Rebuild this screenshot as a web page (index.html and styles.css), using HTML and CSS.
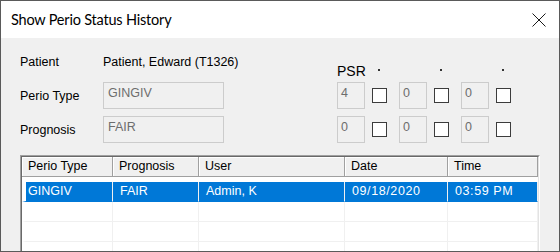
FILE: index.html
```html
<!DOCTYPE html>
<html lang="en">
<head>
    <meta charset="UTF-8">
    <title>Show Perio Status History</title>
    <link rel="stylesheet" href="styles.css">
</head>
<body>
    <div class="window">
        <div class="titlebar">
            <span class="title">Show Perio Status History</span>
            <svg class="close" width="14" height="14" viewBox="0 0 14 14">
                <path d="M0.5 0.5 L13.5 13.5 M13.5 0.5 L0.5 13.5" stroke="#1a1a1a" stroke-width="1" fill="none"/>
            </svg>
        </div>
        <div class="content">
            <div class="form">
                <div class="fields">
                    <span class="label">Patient</span>
                    <span class="value">Patient, Edward (T1326)</span>
                    <span class="label">Perio Type</span>
                    <div class="field">GINGIV</div>
                    <span class="label">Prognosis</span>
                    <div class="field">FAIR</div>
                </div>
                <div class="psr">
                    <span class="psr-title">PSR</span>
                    <span class="dot"></span>
                    <span></span>
                    <span class="dot"></span>
                    <span></span>
                    <span class="dot"></span>

                    <div class="field small">4</div>
                    <span class="check"></span>
                    <div class="field small">0</div>
                    <span class="check"></span>
                    <div class="field small">0</div>
                    <span class="check"></span>

                    <div class="field small">0</div>
                    <span class="check"></span>
                    <div class="field small">0</div>
                    <span class="check"></span>
                    <div class="field small">0</div>
                    <span class="check"></span>
                </div>
            </div>

            <div class="list">
                <div class="list-inner">
                    <div class="head">
                        <span>Perio Type</span>
                        <span>Prognosis</span>
                        <span>User</span>
                        <span>Date</span>
                        <span>Time</span>
                    </div>
                    <div class="rows">
                        <div class="row selected">
                            <span>GINGIV</span>
                            <span>FAIR</span>
                            <span>Admin, K</span>
                            <span class="num">09/18/2020</span>
                            <span class="num">03:59 PM</span>
                        </div>
                        <div class="row"><span></span><span></span><span></span><span></span><span></span></div>
                        <div class="row"><span></span><span></span><span></span><span></span><span></span></div>
                        <div class="row"><span></span><span></span><span></span><span></span><span></span></div>
                    </div>
                </div>
            </div>
        </div>
    </div>
</body>
</html>
```

FILE: styles.css
```css
body {
    margin: 0;
    font-family: "Liberation Sans", Arial, sans-serif;
    font-size: 12.5px;
    color: #000000;
}
.window {
    width: 560px;
    height: 252px;
    box-sizing: border-box;
    border: 1px solid #5a5a5a;
    background-color: #f0f0f0;
    display: flex;
    flex-direction: column;
    overflow: hidden;
}
.titlebar {
    flex: none;
    height: 37px;
    background-color: #ffffff;
    display: flex;
    align-items: center;
    justify-content: space-between;
    padding: 0 13px 0 10px;
}
.title {
    font-family: Lato, "Noto Sans", sans-serif;
    font-size: 14.5px;
    letter-spacing: -0.2px;
}
.close {
    display: block;
}
.content {
    flex: 1;
    padding: 10px 0 0 19px;
    overflow: hidden;
}
.form {
    display: flex;
}
.fields, .psr {
    display: grid;
    grid-template-rows: 27px 27px 27px;
    row-gap: 7px;
    align-items: center;
}
.fields {
    grid-template-columns: 83px 121px;
}
.value {
    white-space: nowrap;
}
.field {
    height: 27px;
    box-sizing: border-box;
    border: 1px solid #cccccc;
    background-color: #f0f0f0;
    color: #6d6d6d;
    padding: 3px 0 0 4px;
}
.psr {
    margin-left: 113px;
    grid-template-columns: 28px 34px 28px 34px 28px 34px;
}
.field.small {
    padding-left: 3px;
}
.psr-title {
    font-size: 14px;
    line-height: 16px;
    align-self: end;
    margin-bottom: -4px;
}
.dot {
    width: 2px;
    height: 2px;
    background-color: #333333;
    align-self: end;
    margin: 0 0 4px 13px;
}
.check {
    width: 15px;
    height: 15px;
    box-sizing: border-box;
    border: 1px solid #3c3c3c;
    background-color: #ffffff;
    margin-left: 7px;
}
.list {
    margin-top: 12px;
    width: 520px;
    height: 110px;
    box-sizing: border-box;
    border: 1px solid;
    border-color: #a0a0a0 #ffffff #ffffff #a0a0a0;
}
.list-inner {
    height: 100%;
    box-sizing: border-box;
    border: 1px solid;
    border-color: #696969 #e3e3e3 #e3e3e3 #696969;
    background-color: #ffffff;
}
.head, .row {
    display: grid;
    grid-template-columns: 91px 86px 146px 103px 90px;
}
.head span {
    height: 20px;
    box-sizing: border-box;
    background-color: #f0f0f0;
    border-right: 1px solid #a0a0a0;
    border-bottom: 1px solid #a0a0a0;
    box-shadow: inset 1px 1px #ffffff;
    padding-left: 6px;
    line-height: 19px;
    white-space: nowrap;
}
.rows {
    padding-top: 5px;
}
.row span {
    height: 20px;
    box-sizing: border-box;
    border-right: 1px solid #f0f0f0;
    border-bottom: 1px solid #f0f0f0;
    padding-left: 7px;
    line-height: 19px;
    white-space: nowrap;
}
.row span:first-child {
    border-left: 4px solid #ffffff;
    padding-left: 2px;
}
.row.selected span {
    background-color: #0078d7;
    border-bottom-color: #0078d7;
    color: #ffffff;
}
.num {
    letter-spacing: 0.6px;
}
```
